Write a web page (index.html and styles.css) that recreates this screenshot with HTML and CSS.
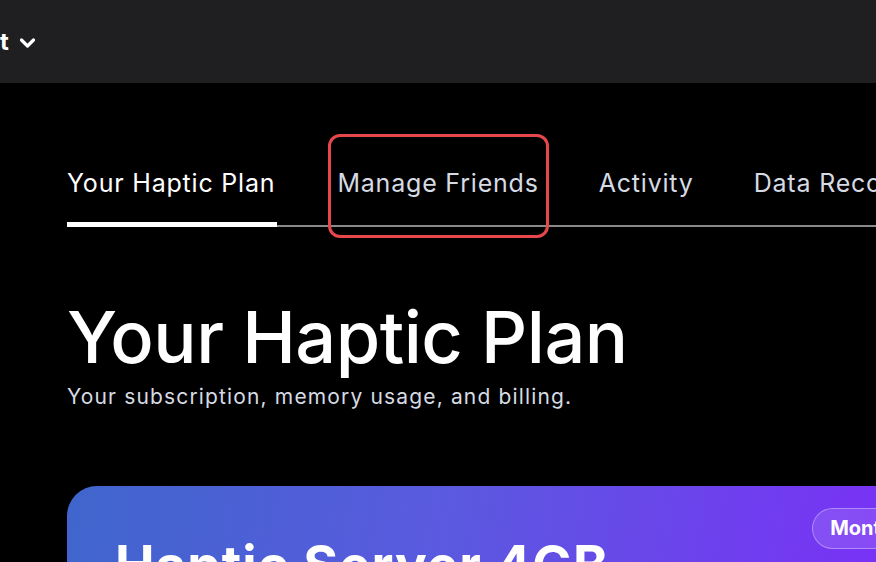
FILE: index.html
```html
<!DOCTYPE html>
<html>
<head>
<meta charset="utf-8">
<link rel="stylesheet" href="styles.css">
</head>
<body>
<header class="topbar">
  <div class="account">
    <span class="account-name">t</span>
    <svg class="chev" width="17" height="12" viewBox="0 0 17 12"><path d="M2.5 3 L8.5 9 L14.5 3" fill="none" stroke="#fff" stroke-width="3.2" stroke-linecap="round" stroke-linejoin="round"/></svg>
  </div>
</header>
<main class="content">
  <nav class="tabs">
    <a class="tab active">Your Haptic Plan</a>
    <a class="tab highlighted">Manage Friends</a>
    <a class="tab">Activity</a>
    <a class="tab">Data Recovery</a>
  </nav>
  <section class="intro">
    <h1 class="title">Your Haptic Plan</h1>
    <p class="subtitle">Your subscription, memory usage, and billing.</p>
  </section>
  <section class="plan-card">
    <div class="plan-head">
      <h2 class="plan-name">Haptic Server 4GB</h2>
      <span class="pill">Monthly</span>
    </div>
  </section>
</main>
</body>
</html>
```

FILE: styles.css
```css
* { box-sizing: border-box; }
html, body { margin: 0; padding: 0; }
body {
  background: #000;
  color: #fff;
  font-family: "Inter", "Liberation Sans", sans-serif;
  width: 876px;
  height: 562px;
  overflow: hidden;
}
.topbar {
  height: 83px;
  background: #1f1f21;
  display: flex;
  align-items: center;
}
.account {
  display: flex;
  align-items: center;
  gap: 10px;
  margin-left: 0;
}
.account-name {
  font-size: 24px;
  font-weight: 700;
  color: #fff;
  line-height: 30px;
}
.chev { margin-top: 2px; }
.content {
  padding-left: 67px;
}
.tabs {
  display: flex;
  gap: 60px;
  margin-top: 82px;
  border-bottom: 2px solid #8a8a8a;
  white-space: nowrap;
  height: 62px;
}
.tab {
  position: relative;
  font-size: 25px;
  letter-spacing: 0.8px;
  line-height: 36px;
  color: #d6dbe3;
  padding-top: 0;
}
.tab.active {
  color: #fff;
  border-bottom: 5px solid #fff;
  margin-bottom: -2px;
  padding-right: 2px;
}
.tab.highlighted::after {
  content: "";
  position: absolute;
  left: -9px;
  right: -10px;
  top: -31px;
  height: 98px;
  border: 3px solid #e5474b;
  border-radius: 12px;
}
.intro { margin-top: 70px; }
.title {
  margin: 0;
  font-size: 72px;
  font-weight: 500;
  line-height: 80px;
  letter-spacing: -0.5px;
}
.subtitle {
  margin: 7px 0 0;
  font-size: 21px;
  letter-spacing: 1.15px;
  color: #d6dbe3;
  line-height: 26px;
}
.plan-card {
  margin-top: 76px;
  height: 200px;
  border-radius: 30px 0 0 0;
  background: linear-gradient(100deg, #3f66cc 0%, #5a5adf 45%, #7a30f6 100%);
  padding: 22px 0 0 48px;
}
.plan-head {
  display: flex;
  justify-content: space-between;
  align-items: flex-start;
}
.plan-name {
  margin: 27px 0 0;
  font-size: 53px;
  letter-spacing: 1px;
  font-weight: 700;
  line-height: 60px;
  white-space: nowrap;
}
.pill {
  margin-right: -53px;
  height: 41px;
  padding: 0 17px;
  border-radius: 21px;
  border: 1.5px solid rgba(255,255,255,0.35);
  background: rgba(255,255,255,0.12);
  font-size: 20px;
  font-weight: 700;
  line-height: 38px;
  white-space: nowrap;
}
```
